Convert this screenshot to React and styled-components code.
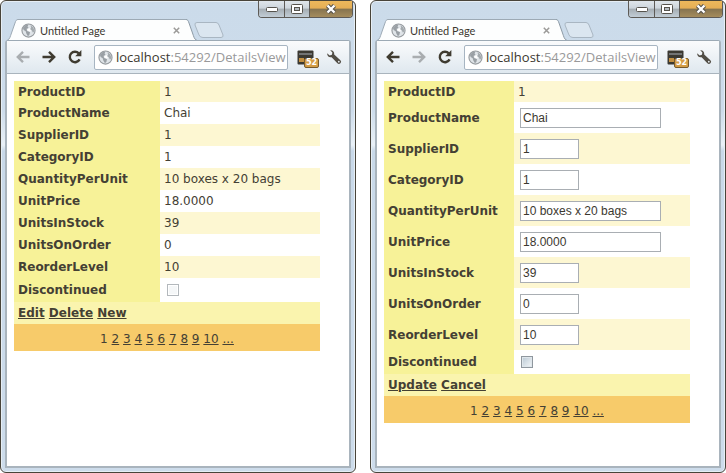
import React, { useState } from 'react';
import styled, { createGlobalStyle, css } from 'styled-components';

const GlobalStyle = createGlobalStyle`
  *, *::before, *::after { box-sizing: border-box; }
  body { margin: 0; background: #fff; }
`;

const pageFont = css`font-family: 'DejaVu Sans', sans-serif;`;

const Desktop = styled.main`
  display: flex;
  gap: 14px;
  min-height: 100vh;
`;

const Window = styled.section`
  flex: 1;
  min-width: 0;
  display: flex;
  flex-direction: column;
  padding: 0 4px 4px;
  border: 1px solid #48443a;
  border-radius: 6px;
  background: linear-gradient(#cbdbea 0, #cddceb 110px, #eaf1f7 144px, #c9d9e9 150px, #cddceb);
  box-shadow: inset 0 0 0 1px #e6eef5;
`;

const Caption = styled.div`
  display: flex;
  justify-content: flex-end;
  height: 18px;
`;

const CaptionButtons = styled.div`
  display: flex;
  height: 17px;
  margin-right: -2px;
  border: 1px solid #5d5a56;
  border-top: 0;
  border-radius: 0 0 4px 4px;
  overflow: hidden;
`;

const CaptionButton = styled.button`
  display: flex;
  align-items: center;
  justify-content: center;
  width: ${(p) => (p.$close ? 43 : 25)}px;
  padding: 0;
  border: 0;
  border-left: ${(p) => (p.$first ? 0 : '1px solid #5d5a56')};
  background: ${(p) =>
    p.$close
      ? 'linear-gradient(#edb85c 0, #e5ae55 45%, #85734f 50%, #a58c5c 100%)'
      : 'linear-gradient(#dfe5ea 0, #cdd5dc 45%, #a5adb3 50%, #c2cdd6 100%)'};
`;

const TabStrip = styled.div`
  display: flex;
  align-items: flex-end;
  height: 22px;
  margin-bottom: -1px;
  padding-left: 2px;
`;

const TabEdge = styled.svg`
  display: block;
  width: 11px;
  height: 22px;
`;

const Tab = styled.div`
  display: flex;
  align-items: center;
  gap: 4px;
  width: 168px;
  height: 22px;
  padding: 0 5px 0 3px;
  border-top: 1px solid #9daab5;
  background: #fdfefe;
  color: #3c382f;
  font-family: Lato, 'Open Sans', sans-serif;
  font-size: 11px;
  line-height: 16px;
`;

const TabTitle = styled.span`
  flex: 1;
  white-space: nowrap;
`;

const IconButton = styled.button`
  display: flex;
  align-items: center;
  justify-content: center;
  flex: none;
  width: ${(p) => p.$w}px;
  height: ${(p) => p.$h}px;
  padding: 0;
  border: 0;
  background: none;
  color: ${(p) => (p.disabled ? '#a9adb0' : '#3f3b30')};
`;

const NewTab = styled(IconButton)`
  align-self: center;
  margin-left: -3px;
`;

const Client = styled.div`
  flex: 1;
  display: flex;
  flex-direction: column;
  border: 2px solid #a9b4bd;
  border-top: 1px solid #9daab5;
  border-radius: 3px 3px 0 0;
  background: #fff;
`;

const Toolbar = styled.nav`
  display: flex;
  align-items: center;
  height: 33px;
  padding: 0 6px 0 7px;
  border-bottom: 1px solid #a9b4bd;
  background: linear-gradient(#fafbfc, #dfe8ef);
`;

const NavButtons = styled.div`
  display: flex;
  gap: 8px;
  margin-right: 10px;
`;

const AddressBox = styled.div`
  flex: 1;
  min-width: 0;
  display: flex;
  align-items: center;
  gap: 3px;
  height: 25px;
  padding: 0 1px 0 3px;
  border: 1px solid #a7b5c2;
  border-radius: 2px;
  background: #fff;
`;

const Address = styled.span`
  flex: 1;
  min-width: 0;
  color: #99999a;
  font-family: 'Open Sans', 'Noto Sans', sans-serif;
  font-size: 13px;
  line-height: 20px;
  white-space: nowrap;
`;

const Host = styled.span`
  color: #3c382f;
`;

const Extension = styled.button`
  position: relative;
  flex: none;
  width: 22px;
  height: 20px;
  margin: 2px 6px 0 9px;
  padding: 0;
  border: 0;
  background: none;
`;

const Badge = styled.span`
  position: absolute;
  right: 0;
  bottom: 0;
  width: 15px;
  height: 10px;
  border: 1px solid #765a2c;
  border-radius: 2px;
  background: #d49d45;
  color: #fff;
  font: bold 8px/8px 'DejaVu Sans', sans-serif;
  text-align: center;
`;

const Page = styled.div`
  flex: 1;
  padding: 7px 29px 40px 7px;
`;

const DetailsTable = styled.table`
  ${pageFont}
  width: 100%;
  border-collapse: collapse;
  color: #444034;
  font-size: 12px;
  line-height: 16px;
`;

const Row = styled.tr`
  height: ${(p) => p.$h}px;
  background: ${(p) => (p.$striped ? '#fdf7d2' : '#fff')};
`;

const FieldName = styled.th`
  width: ${(p) => p.$w}px;
  padding: 0 4px;
  background: #f7f298;
  text-align: left;
`;

const FieldValue = styled.td`
  padding: 0 4px;
`;

const CommandRow = styled.tr`
  height: 22px;
  background: #faf4ae;
`;

const CommandCell = styled.td`
  padding: 0 4px;
  font-weight: bold;
`;

const PagerRow = styled.tr`
  height: 27px;
  background: #f7cb6a;
`;

const PagerCell = styled.td`
  padding: 2px 4px 0;
  text-align: center;
`;

const PageLink = styled.a`
  color: #444034;
  text-decoration: underline;
`;

const TextBox = styled.input`
  display: block;
  width: ${(p) => (p.$wide ? 141 : 59)}px;
  height: 20px;
  margin-left: 2px;
  padding: 0 2px;
  border: 1px solid #a9aeb3;
  background: #fff;
  color: #3c382f;
  font: 12px/16px 'Liberation Sans', Arial, sans-serif;
`;

const CheckBox = styled.input`
  appearance: none;
  display: block;
  width: 12px;
  height: 12px;
  margin: 0 0 0 3px;
  border: 1px solid ${(p) => (p.disabled ? '#b3b8bc' : '#8f979e')};
  background: ${(p) => (p.disabled ? '#f5f7f8' : 'linear-gradient(135deg, #b9c8d3, #f4f7f9)')};
  box-shadow: inset 0 0 0 1px ${(p) => (p.disabled ? '#fff' : '#dfe6eb')};
  &:checked { background: #5b6b78; }
`;

const Globe = ({ size }) => (
  <svg width={size} height={size} viewBox="0 0 16 16" aria-hidden="true">
    <circle cx="8" cy="8" r="7" fill="#dfe4e8" stroke="#969b9f" strokeWidth="1.2" />
    <path d="M2 5 5 2 8 1.6 7 4 8.2 5.4 6 6.2 6.4 8.4 9.6 9.6 9 12.4 7.4 14.2 5.8 11.4 5 8.8 2.8 7.4Z" fill="#9aa0a5" />
    <path d="M10 2.4 13 4.4 14.4 8.4 12.8 10.4 11.4 7.6 9.8 6.6 10.8 4.8Z" fill="#a4aaae" />
    <path d="M6.6 6.6 9 5.4 10.6 8.2 9.8 9.4 7.2 8.2Z" fill="#fff" />
  </svg>
);

const Arrow = ({ forward }) => (
  <svg width="16" height="14" viewBox="0 0 16 14" aria-hidden="true">
    <path
      d={forward ? 'M1.5 7H13M8 1.8 13.2 7 8 12.2' : 'M14.5 7H3M8 1.8 2.8 7 8 12.2'}
      fill="none" stroke="currentColor" strokeWidth="2.4"
    />
  </svg>
);

const Reload = () => (
  <svg width="16" height="16" viewBox="0 0 16 16" aria-hidden="true">
    <path d="M12.6 10.4A5.2 5.2 0 1 1 11.8 4.4" fill="none" stroke="currentColor" strokeWidth="2.4" />
    <path d="M14.4 1V7.2H8.2Z" fill="currentColor" />
  </svg>
);

const Wrench = () => (
  <svg width="16" height="16" viewBox="0 0 16 16" aria-hidden="true">
    <path
      d="M4.2 1.2C6.6.9 8.6 2.8 8.2 5.4L14.4 11.2A2.1 2.1 0 0 1 11.4 14.2L5.6 8.2C3 8.8.9 6.8 1.2 4.2L3.6 6.4 5.9 5.8 6.4 3.5Z"
      fill="#514d45"
    />
    <circle cx="12.8" cy="12.7" r="0.9" fill="#e8edf1" />
  </svg>
);

const Wallet = styled.svg`
  display: block;
`;

const WalletIcon = () => (
  <Wallet width="17" height="16" viewBox="0 0 17 16" aria-hidden="true">
    <rect x="0.5" y="0.5" width="16" height="14" rx="1" fill="#3b3932" />
    <path d="M2 4H15" stroke="#8b8f92" strokeWidth="1.4" />
    <rect x="2" y="8" width="5" height="4" fill="#c28f40" />
  </Wallet>
);

function CaptionBar() {
  return (
    <Caption>
      <CaptionButtons>
        <CaptionButton $first aria-label="Minimize">
          <svg width="12" height="6" viewBox="0 0 12 6">
            <rect x="0.5" y="1.5" width="11" height="4" rx="1" fill="#fff" stroke="#56534d" />
          </svg>
        </CaptionButton>
        <CaptionButton aria-label="Maximize">
          <svg width="12" height="10" viewBox="0 0 12 10">
            <rect x="0.5" y="0.5" width="11" height="9" rx="1" fill="#fff" stroke="#56534d" />
            <rect x="3.5" y="3.5" width="5" height="3" fill="#b4bac0" stroke="#56534d" />
          </svg>
        </CaptionButton>
        <CaptionButton $close aria-label="Close window">
          <svg width="12" height="10" viewBox="0 0 12 10">
            <path d="M2.5 1.5 9.5 8.5M9.5 1.5 2.5 8.5" stroke="#56534d" strokeWidth="4.4" />
            <path d="M2.5 1.5 9.5 8.5M9.5 1.5 2.5 8.5" stroke="#fff" strokeWidth="2.4" />
          </svg>
        </CaptionButton>
      </CaptionButtons>
    </Caption>
  );
}

function BrowserTab() {
  return (
    <TabStrip>
      <TabEdge viewBox="0 0 11 22" aria-hidden="true">
        <path d="M0 22C3 20 3 18 4.5 14L8 4C8.8 1.5 9.5.5 11 .5V22Z" fill="#fdfefe" />
        <path d="M0 21.5C3 20 3 18 4.5 14L8 4C8.8 1.5 9.5.5 11 .5" fill="none" stroke="#9daab5" />
      </TabEdge>
      <Tab>
        <Globe size={15} />
        <TabTitle>Untitled Page</TabTitle>
        <IconButton $w={9} $h={9} aria-label="Close tab">
          <svg width="7" height="7" viewBox="0 0 7 7">
            <path d="M.8.8 6.2 6.2M6.2.8.8 6.2" stroke="#9b9a98" strokeWidth="1.5" />
          </svg>
        </IconButton>
      </Tab>
      <TabEdge viewBox="0 0 11 22" aria-hidden="true">
        <path d="M11 22C8 20 8 18 6.5 14L3 4C2.2 1.5 1.5.5 0 .5V22Z" fill="#fdfefe" />
        <path d="M11 21.5C8 20 8 18 6.5 14L3 4C2.2 1.5 1.5.5 0 .5" fill="none" stroke="#8d9aa5" />
      </TabEdge>
      <NewTab $w={30} $h={16} aria-label="New tab">
        <svg width="30" height="16" viewBox="0 0 30 16">
          <path
            d="M3 .5H22Q24 .5 25 3L29 13Q29.5 15.5 27 15.5H9Q6 15.5 5 13L1 3Q.5 .5 3 .5Z"
            fill="#dbe6f0" stroke="#a9b6c2"
          />
        </svg>
      </NewTab>
    </TabStrip>
  );
}

function BrowserWindow({ canGoBack, children }) {
  return (
    <Window>
      <CaptionBar />
      <BrowserTab />
      <Client>
        <Toolbar>
          <NavButtons>
            <IconButton $w={18} $h={18} disabled={!canGoBack} aria-label="Back"><Arrow /></IconButton>
            <IconButton $w={18} $h={18} disabled={canGoBack} aria-label="Forward"><Arrow forward /></IconButton>
            <IconButton $w={18} $h={18} aria-label="Reload"><Reload /></IconButton>
          </NavButtons>
          <AddressBox>
            <Globe size={15} />
            <Address role="textbox" aria-label="Address" tabIndex={0}>
              <Host>localhost</Host>:54292/DetailsView
            </Address>
          </AddressBox>
          <Extension aria-label="Extension, 52 items">
            <WalletIcon />
            <Badge>52</Badge>
          </Extension>
          <IconButton $w={18} $h={18} aria-label="Settings"><Wrench /></IconButton>
        </Toolbar>
        <Page>{children}</Page>
      </Client>
    </Window>
  );
}

const fields = [
  { name: 'ProductID', value: '1', key: true },
  { name: 'ProductName', value: 'Chai', wide: true },
  { name: 'SupplierID', value: '1' },
  { name: 'CategoryID', value: '1' },
  { name: 'QuantityPerUnit', value: '10 boxes x 20 bags', wide: true },
  { name: 'UnitPrice', value: '18.0000', wide: true },
  { name: 'UnitsInStock', value: '39' },
  { name: 'UnitsOnOrder', value: '0' },
  { name: 'ReorderLevel', value: '10' },
];

const pages = ['2', '3', '4', '5', '6', '7', '8', '9', '10', '...'];

const rowHeight = (field, editable) => {
  if (field.key) return 21;
  return editable ? 31 : 22;
};

function DetailsView({ editing, commands }) {
  const [values, setValues] = useState(() => Object.fromEntries(fields.map((f) => [f.name, f.value])));
  const [discontinued, setDiscontinued] = useState(false);
  const labelWidth = editing ? 130 : 146;
  const checkId = `discontinued-${editing ? 'edit' : 'view'}`;
  return (
    <DetailsTable>
      <tbody>
        {fields.map((f, i) => {
          const editable = editing && !f.key;
          return (
            <Row key={f.name} $h={rowHeight(f, editable)} $striped={i % 2 === 0}>
              <FieldName scope="row" $w={labelWidth}>
                {editable ? <label htmlFor={`edit-${f.name}`}>{f.name}</label> : f.name}
              </FieldName>
              <FieldValue>
                {editable ? (
                  <TextBox
                    id={`edit-${f.name}`}
                    type="text"
                    $wide={f.wide}
                    value={values[f.name]}
                    onChange={(e) => setValues({ ...values, [f.name]: e.target.value })}
                  />
                ) : f.value}
              </FieldValue>
            </Row>
          );
        })}
        <Row $h={24}>
          <FieldName scope="row" $w={labelWidth}>
            <label htmlFor={checkId}>Discontinued</label>
          </FieldName>
          <FieldValue>
            <CheckBox
              id={checkId}
              type="checkbox"
              disabled={!editing}
              checked={discontinued}
              onChange={(e) => setDiscontinued(e.target.checked)}
            />
          </FieldValue>
        </Row>
        <CommandRow>
          <CommandCell colSpan={2}>
            {commands.map((c) => (
              <React.Fragment key={c}><PageLink href={`#${c}`}>{c}</PageLink>{' '}</React.Fragment>
            ))}
          </CommandCell>
        </CommandRow>
        <PagerRow>
          <PagerCell colSpan={2}>
            1{pages.map((p) => (
              <React.Fragment key={p}>{' '}<PageLink href={`#page-${p}`}>{p}</PageLink></React.Fragment>
            ))}
          </PagerCell>
        </PagerRow>
      </tbody>
    </DetailsTable>
  );
}

export default function App() {
  return (
    <>
      <GlobalStyle />
      <Desktop>
        <BrowserWindow>
          <DetailsView commands={['Edit', 'Delete', 'New']} />
        </BrowserWindow>
        <BrowserWindow canGoBack>
          <DetailsView editing commands={['Update', 'Cancel']} />
        </BrowserWindow>
      </Desktop>
    </>
  );
}
